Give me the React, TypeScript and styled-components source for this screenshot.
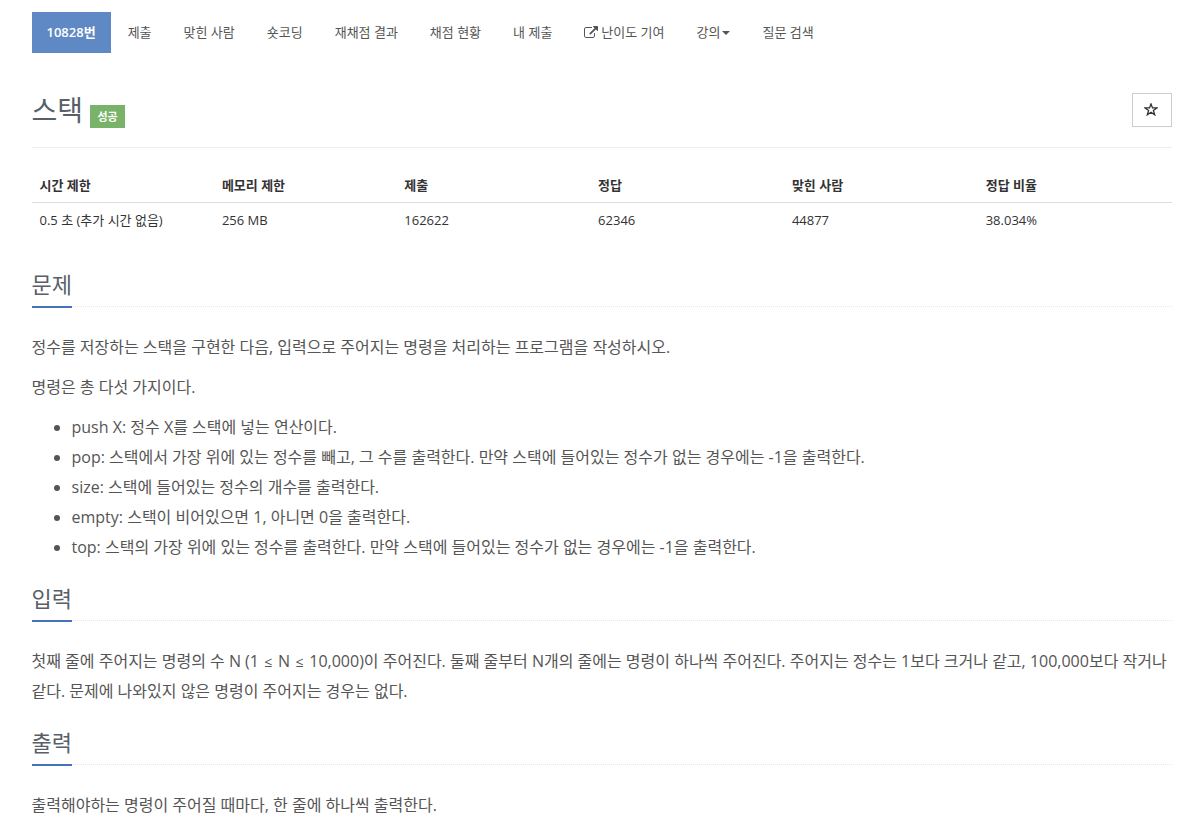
import styled, { createGlobalStyle } from "styled-components";

const GlobalStyle = createGlobalStyle`
  * {
    box-sizing: border-box;
  }

  body {
    margin: 0;
    background: #fff;
    color: #333;
    font-family: "Open Sans", "Noto Sans CJK KR", sans-serif;
    font-size: 13px;
    line-height: 1.6;
  }
`;

const Container = styled.main`
  width: 1140px;
  height: 837px;
  margin: 0 auto;
  padding-top: 12px;
  overflow: hidden;
`;

const Menu = styled.ul`
  display: flex;
  gap: 2px;
  height: 41px;
  margin: 0;
  padding: 0;
  list-style: none;
`;

const MenuLink = styled.a<{ $active?: boolean }>`
  display: flex;
  align-items: center;
  height: 41px;
  padding: 0 15px;
  color: ${({ $active }) => ($active ? "#fff" : "#555")};
  background: ${({ $active }) => ($active ? "#5f89c4" : "transparent")};
  font-weight: ${({ $active }) => ($active ? 600 : 400)};
  text-decoration: none;
  white-space: pre;
`;

const ExternalIcon = styled.svg`
  width: 14px;
  height: 13px;
  margin-right: 3px;
`;

const Caret = styled.span`
  margin-left: 2px;
  border-top: 4px solid #555;
  border-right: 4px solid transparent;
  border-left: 4px solid transparent;
`;

const PageHeader = styled.header`
  display: flex;
  align-items: flex-start;
  height: 95px;
  padding-top: 40px;
  border-bottom: 1px solid #eee;
`;

const Title = styled.h1`
  margin: 0;
  color: #585f69;
  font-size: 28px;
  font-weight: 400;
  line-height: 35px;
`;

const ResultLabel = styled.span`
  width: 35px;
  height: 23px;
  margin: 12px 0 0 7px;
  color: #fff;
  background: #79b369;
  font-size: 11px;
  font-weight: 700;
  line-height: 23px;
  text-align: center;
`;

const FavoriteButton = styled.button`
  display: flex;
  align-items: center;
  justify-content: center;
  width: 40px;
  height: 34px;
  margin-left: auto;
  padding: 0 2px 2px 0;
  color: #333;
  background: #fff;
  border: 1px solid #ccc;
`;

const InfoTable = styled.table`
  width: 100%;
  margin-top: 20px;
  border-collapse: collapse;
  table-layout: fixed;

  th,
  td {
    height: 35px;
    padding: 1px 8px 0;
    text-align: left;
  }

  th {
    height: 34px;
    border-bottom: 1px solid #ddd;
    font-weight: 700;
  }
`;

const InfoColumn = styled.col<{ $width: number }>`
  width: ${({ $width }) => $width}%;
`;

const Section = styled.section<{ $first?: boolean }>`
  margin-top: ${({ $first }) => ($first ? 31 : 20)}px;
`;

const Headline = styled.div`
  display: flex;
  height: 39px;
  margin-bottom: 25px;
  border-bottom: 1px dotted #e4e9f0;

  h2 {
    height: 40px;
    margin: 0;
    color: #585f69;
    border-bottom: 2px solid #4272bb;
    font-size: 22px;
    font-weight: 400;
    line-height: 32px;
  }
`;

const ProblemText = styled.div`
  color: #555;
  font-size: 16px;
  line-height: 30px;

  p {
    margin: 0 0 10px;
  }

  ul {
    margin: 0;
    padding-left: 40px;
  }
`;

const Relation = styled.span`
  padding: 0 1.4px;
  font-size: 14px;
  line-height: 1;
`;

const menu = [
  "제출",
  "맞힌 사람",
  "숏코딩",
  "재채점 결과",
  "채점 현황",
  "내 제출",
];

const info = [
  { name: "시간 제한", value: "0.5 초 (추가 시간 없음)", width: 16 },
  { name: "메모리 제한", value: "256 MB", width: 16 },
  { name: "제출", value: "162622", width: 17 },
  { name: "정답", value: "62346", width: 17 },
  { name: "맞힌 사람", value: "44877", width: 17 },
  { name: "정답 비율", value: "38.034%", width: 17 },
];

const commands = [
  "push X: 정수 X를 스택에 넣는 연산이다.",
  "pop: 스택에서 가장 위에 있는 정수를 빼고, 그 수를 출력한다. 만약 스택에 들어있는 정수가 없는 경우에는 -1을 출력한다.",
  "size: 스택에 들어있는 정수의 개수를 출력한다.",
  "empty: 스택이 비어있으면 1, 아니면 0을 출력한다.",
  "top: 스택의 가장 위에 있는 정수를 출력한다. 만약 스택에 들어있는 정수가 없는 경우에는 -1을 출력한다.",
];

const ProblemMenu = () => (
  <nav>
    <Menu>
      <li>
        <MenuLink $active>10828번</MenuLink>
      </li>
      {menu.map((name) => (
        <li key={name}>
          <MenuLink>{name}</MenuLink>
        </li>
      ))}
      <li>
        <MenuLink>
          <ExternalIcon viewBox="0 0 1792 1664" fill="currentColor">
            <path d="M1408 928v320q0 119-84.500 203.500T1120 1536H288q-119 0-203.500-84.500T0 1248V416q0-119 84.500-203.500T288 128h704q14 0 23 9t9 23v64q0 14-9 23t-23 9H288q-66 0-113 47t-47 113v832q0 66 47 113t113 47h832q66 0 113-47t47-113V928q0-14 9-23t23-9h64q14 0 23 9t9 23zM1792 64v512q0 26-19 45t-45 19-45-19l-176-176-652 652q-10 10-23 10t-23-10L695 983q-10-10-10-23t10-23l652-652-176-176q-19-19-19-45t19-45 45-19h512q26 0 45 19t19 45z" />
          </ExternalIcon>
          난이도 기여
        </MenuLink>
      </li>
      <li>
        <MenuLink>
          강의
          <Caret />
        </MenuLink>
      </li>
      <li>
        <MenuLink>질문 검색</MenuLink>
      </li>
    </Menu>
  </nav>
);

const App = () => (
  <>
    <GlobalStyle />
    <Container>
      <ProblemMenu />
      <PageHeader>
        <Title>스택</Title>
        <ResultLabel>성공</ResultLabel>
        <FavoriteButton aria-label="즐겨찾기">
          <svg width="14" height="13" viewBox="0 0 14 13">
            <path
              d="M7 .9 8.500 4.900H12.900L9.400 7.500 10.700 11.800 7 9.200 3.300 11.800 4.600 7.500 1.100 4.900H5.500Z"
              fill="none"
              stroke="currentColor"
              strokeWidth="1.3"
            />
          </svg>
        </FavoriteButton>
      </PageHeader>
      <InfoTable>
        <colgroup>
          {info.map(({ name, width }) => (
            <InfoColumn key={name} $width={width} />
          ))}
        </colgroup>
        <thead>
          <tr>
            {info.map(({ name }) => (
              <th key={name}>{name}</th>
            ))}
          </tr>
        </thead>
        <tbody>
          <tr>
            {info.map(({ name, value }) => (
              <td key={name}>{value}</td>
            ))}
          </tr>
        </tbody>
      </InfoTable>

      <Section $first>
        <Headline>
          <h2>문제</h2>
        </Headline>
        <ProblemText>
          <p>정수를 저장하는 스택을 구현한 다음, 입력으로 주어지는 명령을 처리하는 프로그램을 작성하시오.</p>
          <p>명령은 총 다섯 가지이다.</p>
          <ul>
            {commands.map((command) => (
              <li key={command}>{command}</li>
            ))}
          </ul>
        </ProblemText>
      </Section>

      <Section>
        <Headline>
          <h2>입력</h2>
        </Headline>
        <ProblemText>
          <p>
            첫째 줄에 주어지는 명령의 수 N (1 <Relation>≤</Relation> N <Relation>≤</Relation> 10,000)이
            주어진다. 둘째 줄부터 N개의 줄에는 명령이 하나씩 주어진다. 주어지는 정수는 1보다 크거나 같고,
            100,000보다 작거나 같다. 문제에 나와있지 않은 명령이 주어지는 경우는 없다.
          </p>
        </ProblemText>
      </Section>

      <Section>
        <Headline>
          <h2>출력</h2>
        </Headline>
        <ProblemText>
          <p>출력해야하는 명령이 주어질 때마다, 한 줄에 하나씩 출력한다.</p>
        </ProblemText>
      </Section>
    </Container>
  </>
);

export default App;
